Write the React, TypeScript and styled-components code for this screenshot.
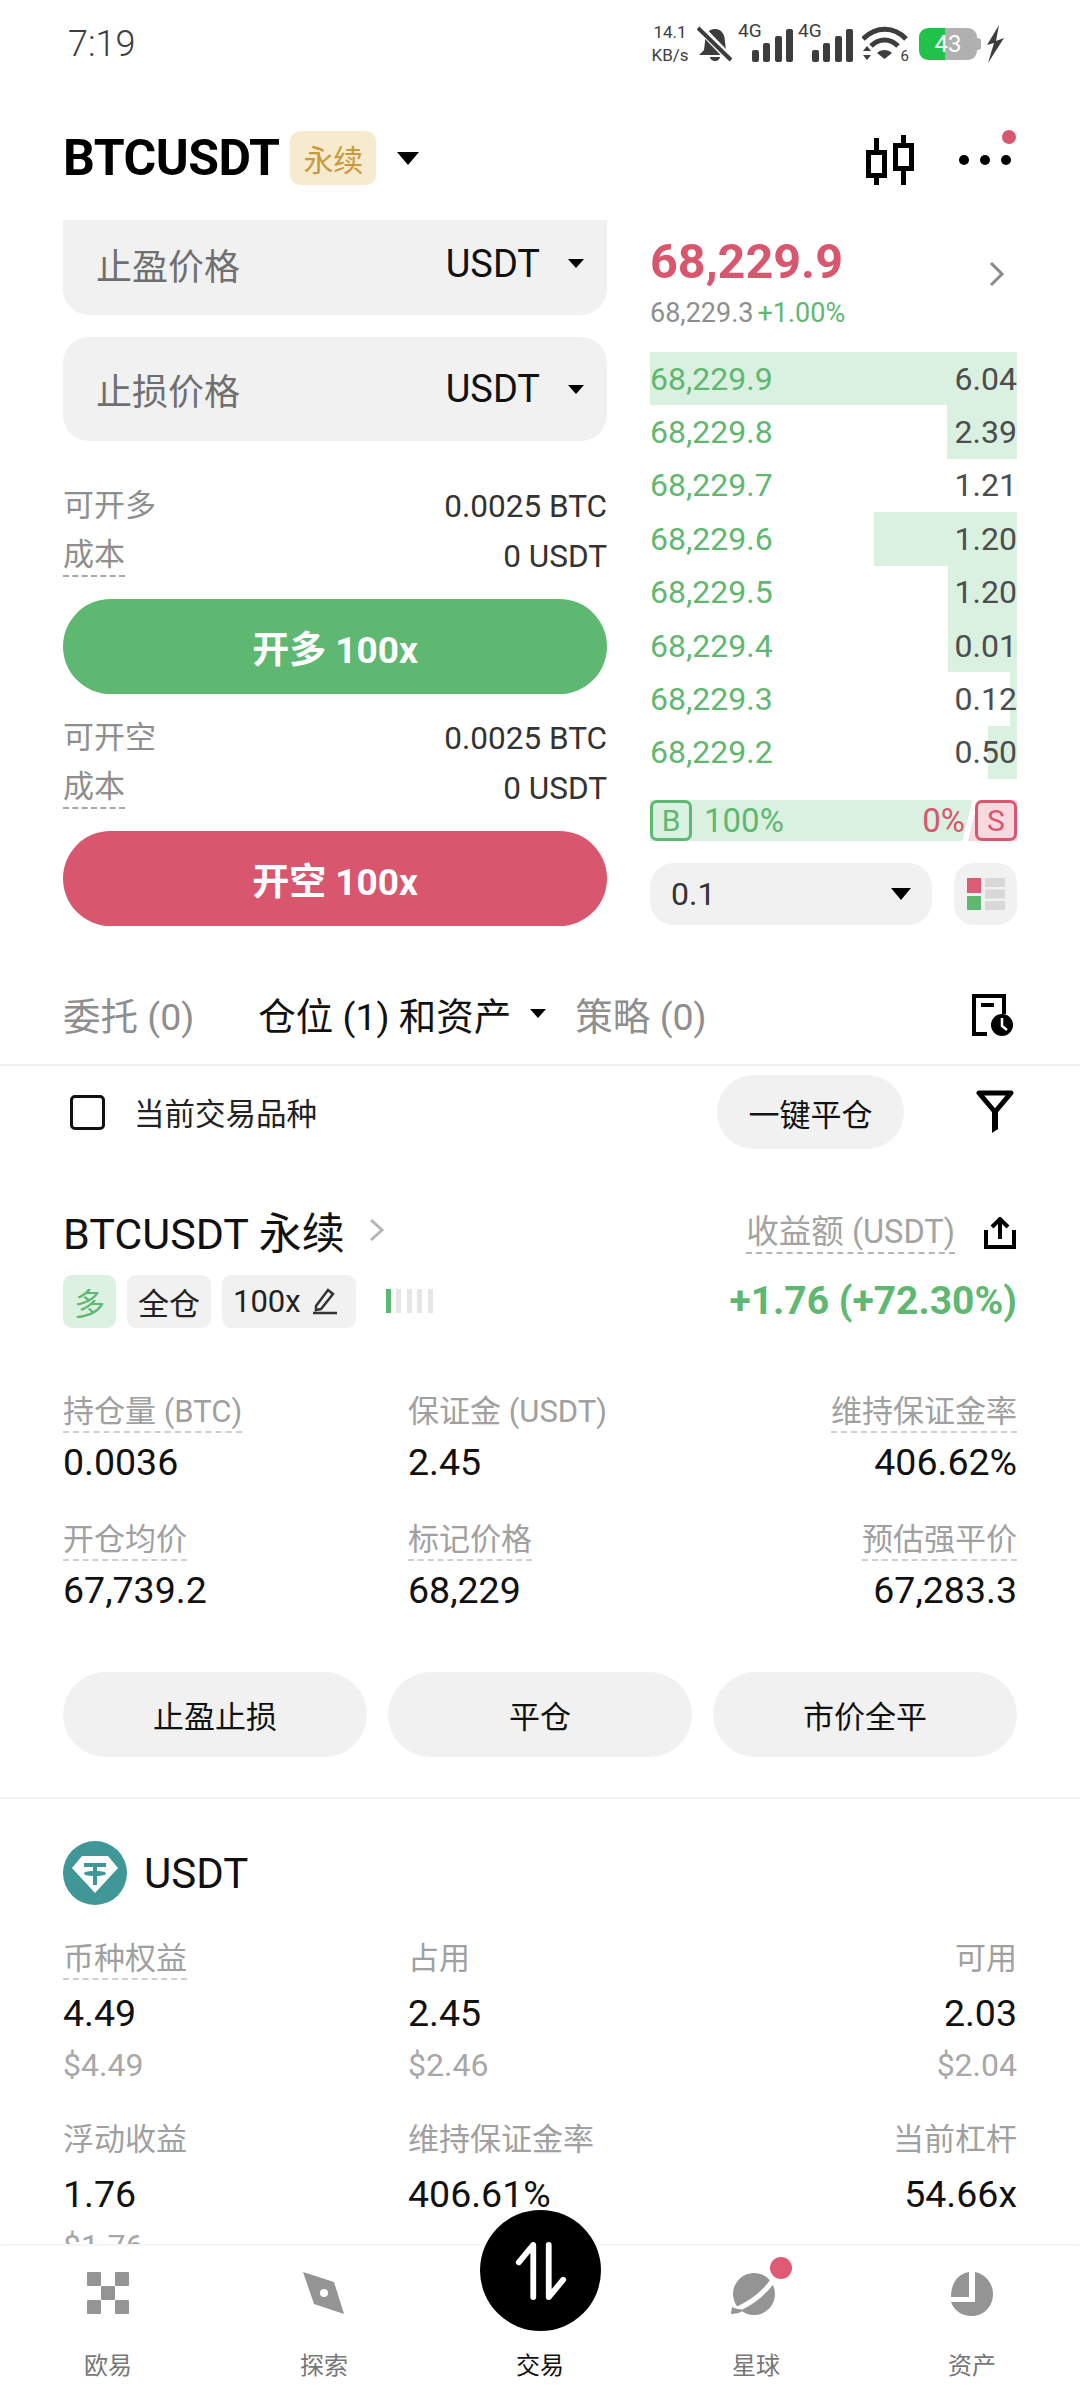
import React from 'react'
import styled, { createGlobalStyle } from 'styled-components'

const FONT = `Roboto, "Noto Sans CJK SC", sans-serif`
const GREEN = '#5fb871'
const RED = '#d9566f'
const GREY = '#8e8e8e'

const GlobalStyle = createGlobalStyle`
  html, body { margin: 0; padding: 0; background: #fff; }
  * { box-sizing: border-box; }
  body { font-family: ${FONT}; color: #000; }
`

const Page = styled.div`
  position: relative;
  width: 1080px;
  height: 2400px;
  overflow: hidden;
  background: #fff;
`

const StatusBar = styled.div`
  height: 96px;
  padding: 0 75px 8px 68px;
  display: flex;
  align-items: center;
  justify-content: space-between;
  color: #3d3d3d;
`
const Clock = styled.span`
  font-size: 36px;
  font-weight: 300;
`
const StatusIcons = styled.div`
  display: flex;
  align-items: center;
`
const Speed = styled.div`
  font-size: 17px;
  line-height: 23px;
  text-align: center;
  width: 38px;
  margin-right: 8px;
`
const NetBlock = styled.div`
  position: relative;
  width: 60px;
  height: 36px;
  display: flex;
  justify-content: flex-end;
  align-items: flex-end;
`
const NetLabel = styled.span`
  position: absolute;
  left: 5px;
  top: -5px;
  font-size: 19px;
  line-height: 20px;
`
const WifiBlock = styled.div`
  position: relative;
  width: 46px;
  height: 36px;
  margin-left: 9px;
`
const WifiBand = styled.span`
  position: absolute;
  right: -1px;
  bottom: -2px;
  font-size: 15px;
  line-height: 16px;
`
const Battery = styled.div`
  position: relative;
  width: 58px;
  height: 32px;
  margin: 0 8px 0 11px;
  border-radius: 9px;
  background: linear-gradient(90deg, #22c24a 0 45%, #b0b0b0 45% 100%);
  color: #fff;
  font-size: 24px;
  line-height: 32px;
  text-align: center;
  &::after {
    content: '';
    position: absolute;
    right: -4px;
    top: 10px;
    width: 4px;
    height: 12px;
    border-radius: 0 3px 3px 0;
    background: #b0b0b0;
  }
`

const Header = styled.div`
  height: 124px;
  padding: 0 63px;
  display: flex;
  align-items: center;
`
const Symbol = styled.h1`
  margin: 0;
  font-size: 50px;
  font-weight: 700;
  letter-spacing: -0.5px;
`
const PerpBadge = styled.span`
  width: 86px;
  height: 54px;
  margin-left: 11px;
  border-radius: 10px;
  background: #f7ebcf;
  color: #c99a3c;
  font-size: 30px;
  display: flex;
  align-items: center;
  justify-content: center;
`
const Caret = styled.span<{ $size?: number; $color?: string }>`
  display: inline-block;
  width: 0;
  height: 0;
  border-left: ${(p) => p.$size ?? 10}px solid transparent;
  border-right: ${(p) => p.$size ?? 10}px solid transparent;
  border-top: ${(p) => (p.$size ?? 10) * 1.2}px solid ${(p) => p.$color ?? '#000'};
`
const HeaderCaret = styled(Caret)`
  margin-left: 21px;
`
const HeaderActions = styled.div`
  margin-left: auto;
  margin-right: 6px;
  padding-top: 4px;
  display: flex;
  align-items: center;
  gap: 45px;
`
const MoreButton = styled.div`
  position: relative;
  width: 52px;
  height: 10px;
  display: flex;
  justify-content: space-between;
  &::after {
    content: '';
    position: absolute;
    right: -5px;
    top: -25px;
    width: 14px;
    height: 14px;
    border-radius: 50%;
    background: ${RED};
  }
`
const Dot = styled.i`
  width: 10px;
  height: 10px;
  border-radius: 50%;
  background: #000;
`

const TradePanel = styled.div`
  height: 742px;
  padding: 0 63px;
  display: grid;
  grid-template-columns: 544px 367px;
  column-gap: 43px;
`
const LeftColumn = styled.div`
  display: flex;
  flex-direction: column;
`
const PriceField = styled.div<{ $clipped?: boolean }>`
  height: ${(p) => (p.$clipped ? 95 : 104)}px;
  margin-bottom: ${(p) => (p.$clipped ? 22 : 40)}px;
  padding: ${(p) => (p.$clipped ? '0 23px 8px 33px' : '0 23px 0 33px')};
  border-radius: ${(p) => (p.$clipped ? '0 0 26px 26px' : '26px')};
  background: #f1f1f1;
  display: flex;
  align-items: center;
  justify-content: space-between;
`
const FieldLabel = styled.span`
  font-size: 36px;
  color: #6f6f6f;
`
const FieldUnit = styled.span`
  display: flex;
  align-items: center;
  gap: 28px;
  font-size: 38px;
  color: #111;
`
const InfoRow = styled.div`
  height: 50px;
  display: flex;
  align-items: center;
  justify-content: space-between;
  font-size: 31.5px;
  color: #333;
`
const InfoLabel = styled.span<{ $dashed?: boolean }>`
  font-size: 31px;
  line-height: 38px;
  color: ${GREY};
  ${(p) => p.$dashed && `border-bottom: 2px dashed #a8a8a8; padding-bottom: 1px;`}
`
const ActionButton = styled.div<{ $color: string }>`
  height: 95px;
  margin: 18px 0 19px;
  border-radius: 48px;
  background: ${(p) => p.$color};
  color: #fff;
  font-size: 37px;
  font-weight: 700;
  display: flex;
  align-items: center;
  justify-content: center;
`

const RightColumn = styled.div`
  display: flex;
  flex-direction: column;
`
const PriceBlock = styled.div`
  height: 132px;
  padding-top: 14px;
  position: relative;
`
const LastPrice = styled.div`
  font-size: 48.5px;
  line-height: 56px;
  font-weight: 700;
  color: ${RED};
`
const SubPrice = styled.div`
  margin-top: 6px;
  font-size: 27px;
  line-height: 34px;
  color: ${GREY};
  span {
    color: ${GREEN};
    margin-left: 4px;
  }
`
const PriceChevron = styled.svg`
  position: absolute;
  right: 12px;
  top: 41px;
`
const BookRow = styled.div`
  position: relative;
  height: 53.4px;
  display: flex;
  align-items: center;
  justify-content: space-between;
  font-size: 32px;
  color: ${GREEN};
`
const BookBar = styled.div`
  position: absolute;
  right: 0;
  top: 0;
  bottom: 0;
  background: #daf0e0;
`
const BookPrice = styled.span`
  position: relative;
`
const BookSize = styled.span`
  position: relative;
  color: #4d4d4d;
`
const RatioBar = styled.div`
  position: relative;
  height: 41px;
  margin-top: 21px;
  display: flex;
  align-items: center;
  font-size: 33px;
  background: linear-gradient(104deg, #daf0e0 0 85.5%, #fff 85.5% 87%, #f9d9e0 87% 100%);
`
const SideBox = styled.span<{ $color: string; $fill: string }>`
  width: 42px;
  height: 41px;
  border: 3px solid ${(p) => p.$color};
  border-radius: 7px;
  background: ${(p) => p.$fill};
  color: ${(p) => p.$color};
  font-size: 30px;
  display: flex;
  align-items: center;
  justify-content: center;
`
const RatioBuy = styled.span`
  margin-left: 12px;
  color: ${GREEN};
`
const RatioSell = styled.span`
  margin-left: auto;
  margin-right: 10px;
  color: ${RED};
`
const DepthRow = styled.div`
  margin-top: 22px;
  display: flex;
  justify-content: space-between;
`
const DepthSelect = styled.div`
  width: 282px;
  height: 62px;
  padding: 0 21px 0 21px;
  border-radius: 24px;
  background: #f1f1f1;
  font-size: 32px;
  color: #333;
  display: flex;
  align-items: center;
  justify-content: space-between;
`
const LayoutButton = styled.div`
  width: 63px;
  height: 62px;
  border-radius: 20px;
  background: #f1f1f1;
  display: flex;
  align-items: center;
  justify-content: center;
`

const Tabs = styled.div`
  height: 104px;
  padding: 0 63px 0 63px;
  border-bottom: 2px solid #efefef;
  display: flex;
  align-items: center;
  font-size: 37.5px;
`
const Tab = styled.span<{ $active?: boolean }>`
  color: ${(p) => (p.$active ? '#111' : GREY)};
`
const ActiveTab = styled(Tab)`
  margin-left: 64px;
`
const TabCaret = styled(Caret)`
  margin: 0 29px 0 19px;
`
const TabIcon = styled.svg`
  margin-left: auto;
  margin-right: 2px;
  margin-top: 3px;
`

const FilterBar = styled.div`
  height: 84px;
  margin-top: 4px;
  padding: 0 66px 0 70px;
  display: flex;
  align-items: center;
`
const Checkbox = styled.span`
  width: 35px;
  height: 35px;
  border: 3px solid #111;
  border-radius: 5px;
`
const FilterLabel = styled.span`
  margin-left: 29px;
  font-size: 30.5px;
  color: #222;
`
const CloseAll = styled.div`
  width: 187px;
  height: 74px;
  margin-left: auto;
  border-radius: 37px;
  background: #f1f1f1;
  font-size: 31px;
  color: #111;
  display: flex;
  align-items: center;
  justify-content: center;
`
const FilterIcon = styled.svg`
  margin-left: 72px;
`

const Position = styled.div`
  height: 645px;
  padding: 46px 63px 0;
  border-bottom: 2px solid #f1f1f1;
`
const PositionHead = styled.div`
  display: flex;
  align-items: center;
  justify-content: space-between;
  height: 60px;
`
const PositionTitle = styled.div`
  display: flex;
  align-items: center;
  gap: 24px;
  font-size: 43px;
  color: #111;
`
const PnlLabel = styled.div`
  display: flex;
  align-items: center;
  gap: 28px;
  font-size: 32.5px;
  color: #a3a3a3;
  padding-top: 6px;
`
const DashedText = styled.span`
  border-bottom: 2px dashed #b5b5b5;
  line-height: 40px;
`
const TagRow = styled.div`
  margin-top: 14px;
  height: 54px;
  display: flex;
  align-items: center;
  gap: 11px;
`
const Tag = styled.span<{ $long?: boolean; $wide?: boolean }>`
  height: 53px;
  padding: 0 ${(p) => (p.$wide ? 17 : 11)}px 0 11px;
  border-radius: 9px;
  background: ${(p) => (p.$long ? '#dcf1e2' : '#f1f1f1')};
  color: ${(p) => (p.$long ? GREEN : '#222')};
  font-size: 31px;
  display: flex;
  align-items: center;
  gap: 10px;
`
const LeverageBars = styled.div`
  margin-left: 19px;
  display: flex;
  gap: 5.5px;
`
const LeverageBar = styled.i<{ $on?: boolean }>`
  width: 5px;
  height: 24px;
  background: ${(p) => (p.$on ? GREEN : '#e6e6e6')};
`
const Pnl = styled.span`
  margin-left: auto;
  font-size: 39px;
  font-weight: 700;
  color: ${GREEN};
`
const StatsGrid = styled.div<{ $top: number; $rowGap: number }>`
  margin-top: ${(p) => p.$top}px;
  display: grid;
  grid-template-columns: 345px 1fr auto;
  row-gap: ${(p) => p.$rowGap}px;
`
const Stat = styled.div<{ $right?: boolean }>`
  text-align: ${(p) => (p.$right ? 'right' : 'left')};
`
const StatLabel = styled.div`
  height: 40px;
  font-size: 31px;
  line-height: 40px;
  color: #a0a0a0;
`
const DashedLabel = styled.span<{ $dashed?: boolean }>`
  display: inline-block;
  line-height: 38px;
  ${(p) => p.$dashed && `border-bottom: 2px dashed #cfcfcf;`}
`
const StatValue = styled.div<{ $gap?: number }>`
  margin-top: ${(p) => p.$gap ?? 8}px;
  font-size: 37.5px;
  line-height: 44px;
  color: #111;
`
const StatFiat = styled.div`
  margin-top: 9px;
  font-size: 32px;
  line-height: 42px;
  color: #a8a8a8;
`
const PositionActions = styled.div`
  margin-top: 60px;
  display: grid;
  grid-template-columns: repeat(3, 1fr);
  column-gap: 21px;
`
const PillButton = styled.div`
  height: 85px;
  border-radius: 43px;
  background: #f1f1f1;
  font-size: 31px;
  color: #111;
  display: flex;
  align-items: center;
  justify-content: center;
`

const Asset = styled.div`
  padding: 42px 63px 0;
`
const AssetHead = styled.div`
  display: flex;
  align-items: center;
  gap: 17px;
  font-size: 42px;
  color: #111;
`

const BottomNav = styled.div`
  position: absolute;
  left: 0;
  right: 0;
  bottom: 0;
  height: 156px;
  background: #fff;
  border-top: 2px solid #f6f6f6;
  box-shadow: 0 -6px 10px rgba(0, 0, 0, 0.012);
  display: grid;
  grid-template-columns: repeat(5, 1fr);
`
const NavItem = styled.div<{ $active?: boolean }>`
  position: relative;
  padding-top: 98px;
  text-align: center;
  font-size: 24px;
  line-height: 44px;
  color: ${(p) => (p.$active ? '#111' : '#777')};
`
const NavIcon = styled.svg<{ $top?: number; $shift?: number }>`
  position: absolute;
  left: 50%;
  top: ${(p) => p.$top ?? 26}px;
  margin-left: ${(p) => p.$shift ?? 0}px;
  transform: translateX(-50%);
`
const TradeCircle = styled.div`
  position: absolute;
  left: 50%;
  top: -36px;
  width: 121px;
  height: 121px;
  margin-left: -60px;
  border-radius: 50%;
  background: #000;
  display: flex;
  align-items: center;
  justify-content: center;
`

const stats = [
  { label: '持仓量 (BTC)', value: '0.0036', dashed: true },
  { label: '保证金 (USDT)', value: '2.45' },
  { label: '维持保证金率', value: '406.62%', dashed: true, right: true },
  { label: '开仓均价', value: '67,739.2', dashed: true },
  { label: '标记价格', value: '68,229', dashed: true },
  { label: '预估强平价', value: '67,283.3', dashed: true, right: true },
]

const assets = [
  { label: '币种权益', value: '4.49', fiat: '$4.49', dashed: true },
  { label: '占用', value: '2.45', fiat: '$2.46' },
  { label: '可用', value: '2.03', fiat: '$2.04', right: true },
  { label: '浮动收益', value: '1.76', fiat: '$1.76' },
  { label: '维持保证金率', value: '406.61%', fiat: '' },
  { label: '当前杠杆', value: '54.66x', fiat: '', right: true },
]

const book = [
  ['68,229.9', '6.04', 367],
  ['68,229.8', '2.39', 70],
  ['68,229.7', '1.21', 0],
  ['68,229.6', '1.20', 143],
  ['68,229.5', '1.20', 69],
  ['68,229.4', '0.01', 69],
  ['68,229.3', '0.12', 7],
  ['68,229.2', '0.50', 29],
] as const

const SignalBars = () => (
  <svg width="41" height="33" viewBox="0 0 41 33" fill="#3d3d3d">
    <rect x="0" y="21" width="7" height="12" rx="2" />
    <rect x="11" y="14" width="7" height="19" rx="2" />
    <rect x="23" y="7" width="7" height="26" rx="2" />
    <rect x="34" y="0" width="7" height="33" rx="2" />
  </svg>
)

const App: React.FC = () => (
  <Page>
    <GlobalStyle />
    <StatusBar>
      <Clock>7:19</Clock>
      <StatusIcons>
        <Speed>
          14.1
          <br />
          KB/s
        </Speed>
        <svg width="36" height="36" viewBox="0 0 36 36" fill="#3d3d3d">
          <path d="M18 3c7 0 10 6 10 13l1 8 5 5H2l5-5 1-8c0-7 3-13 10-13z" />
          <path d="M13 31h10a5 4 0 0 1-10 0z" />
          <path d="M3 2l31 32" stroke="#fff" strokeWidth="8" />
          <path d="M1 2l33 32" stroke="#3d3d3d" strokeWidth="4" />
        </svg>
        <NetBlock>
          <NetLabel>4G</NetLabel>
          <SignalBars />
        </NetBlock>
        <NetBlock>
          <NetLabel>4G</NetLabel>
          <SignalBars />
        </NetBlock>
        <WifiBlock>
          <svg width="46" height="36" viewBox="0 0 46 36" fill="none">
            <path d="M1 13C14 0 32 0 44 13" stroke="#3d3d3d" strokeWidth="5" />
            <path d="M9 20c8-8 19-8 27 0" stroke="#3d3d3d" strokeWidth="5" />
            <path d="M15 27c4-4 11-4 15 0l-7.500 6z" fill="#3d3d3d" />
            <path d="M1 25l4-5 4 5zM1 29l4 5 4-5z" fill="#3d3d3d" />
          </svg>
          <WifiBand>6</WifiBand>
        </WifiBlock>
        <Battery>43</Battery>
        <svg width="20" height="38" viewBox="0 0 20 38" fill="#3d3d3d">
          <path d="M14 0L2 20l7-2-6 20L19 13l-8 3z" />
        </svg>
      </StatusIcons>
    </StatusBar>

    <Header>
      <Symbol>BTCUSDT</Symbol>
      <PerpBadge>永续</PerpBadge>
      <HeaderCaret $size={11} />
      <HeaderActions>
        <svg width="48" height="50" viewBox="0 0 48 50" fill="none" stroke="#000" strokeWidth="5">
          <rect x="2.500" y="17.500" width="16" height="23" fill="#fff" />
          <path d="M10.500 3v14M10.500 41v9" />
          <rect x="29.500" y="10.500" width="16" height="23" fill="#fff" />
          <path d="M37.500 0v10M37.500 34v16" />
        </svg>
        <MoreButton>
          <Dot />
          <Dot />
          <Dot />
        </MoreButton>
      </HeaderActions>
    </Header>

    <TradePanel>
      <LeftColumn>
        <PriceField $clipped>
          <FieldLabel>止盈价格</FieldLabel>
          <FieldUnit>
            USDT
            <Caret $size={8} />
          </FieldUnit>
        </PriceField>
        <PriceField>
          <FieldLabel>止损价格</FieldLabel>
          <FieldUnit>
            USDT
            <Caret $size={8} />
          </FieldUnit>
        </PriceField>
        <InfoRow>
          <InfoLabel>可开多</InfoLabel>
          <span>0.0025 BTC</span>
        </InfoRow>
        <InfoRow>
          <InfoLabel $dashed>成本</InfoLabel>
          <span>0 USDT</span>
        </InfoRow>
        <ActionButton $color={GREEN}>开多 100x</ActionButton>
        <InfoRow>
          <InfoLabel>可开空</InfoLabel>
          <span>0.0025 BTC</span>
        </InfoRow>
        <InfoRow>
          <InfoLabel $dashed>成本</InfoLabel>
          <span>0 USDT</span>
        </InfoRow>
        <ActionButton $color={RED}>开空 100x</ActionButton>
      </LeftColumn>

      <RightColumn>
        <PriceBlock>
          <LastPrice>68,229.9</LastPrice>
          <SubPrice>
            68,229.3<span>+1.00%</span>
          </SubPrice>
          <PriceChevron width="16" height="26" viewBox="0 0 16 26" fill="none" stroke="#8a8a8a" strokeWidth="3">
            <path d="M2 2l11 11L2 24" />
          </PriceChevron>
        </PriceBlock>
        {book.map(([price, size, width]) => (
          <BookRow key={price}>
            <BookBar style={{ width }} />
            <BookPrice>{price}</BookPrice>
            <BookSize>{size}</BookSize>
          </BookRow>
        ))}
        <RatioBar>
          <SideBox $color={GREEN} $fill="transparent">B</SideBox>
          <RatioBuy>100%</RatioBuy>
          <RatioSell>0%</RatioSell>
          <SideBox $color={RED} $fill="#f9d9e0">S</SideBox>
        </RatioBar>
        <DepthRow>
          <DepthSelect>
            0.1
            <Caret $size={10} />
          </DepthSelect>
          <LayoutButton>
            <svg width="38" height="32" viewBox="0 0 38 32">
              <rect x="0" y="0" width="14" height="15" fill="#df5b75" />
              <rect x="0" y="18" width="14" height="14" fill={GREEN} />
              <rect x="18" y="0" width="20" height="9" fill="#d8d8d8" />
              <rect x="18" y="11.500" width="20" height="9" fill="#d8d8d8" />
              <rect x="18" y="23" width="20" height="9" fill="#d8d8d8" />
            </svg>
          </LayoutButton>
        </DepthRow>
      </RightColumn>
    </TradePanel>

    <Tabs>
      <Tab>委托 (0)</Tab>
      <ActiveTab $active>仓位 (1) 和资产</ActiveTab>
      <TabCaret $size={8} />
      <Tab>策略 (0)</Tab>
      <TabIcon width="44" height="42" viewBox="0 0 42 42" fill="none">
        <path d="M15 40H2V2h30v18" stroke="#000" strokeWidth="4" />
        <path d="M9 11h13" stroke="#000" strokeWidth="4" />
        <circle cx="30" cy="31" r="11" fill="#000" />
        <path d="M30 24v8l5 4" stroke="#fff" strokeWidth="2.500" />
      </TabIcon>
    </Tabs>

    <FilterBar>
      <Checkbox />
      <FilterLabel>当前交易品种</FilterLabel>
      <CloseAll>一键平仓</CloseAll>
      <FilterIcon width="38" height="44" viewBox="0 0 38 44" fill="none">
        <path d="M3 3h32L19 22z" stroke="#000" strokeWidth="5" strokeLinejoin="round" />
        <path d="M16 20h6v19l-6 4z" fill="#000" />
      </FilterIcon>
    </FilterBar>

    <Position>
      <PositionHead>
        <PositionTitle>
          BTCUSDT 永续
          <svg width="16" height="24" viewBox="0 0 16 24" fill="none" stroke="#b5b5b5" strokeWidth="3">
            <path d="M2 2l11 10L2 22" />
          </svg>
        </PositionTitle>
        <PnlLabel>
          <DashedText>收益额 (USDT)</DashedText>
          <svg width="34" height="32" viewBox="0 0 34 32" fill="none" stroke="#000" strokeWidth="4">
            <path d="M3 13v17h28V13" />
            <path d="M17 22V3M9 10l8-8 8 8" />
          </svg>
        </PnlLabel>
      </PositionHead>
      <TagRow>
        <Tag $long>多</Tag>
        <Tag>全仓</Tag>
        <Tag $wide>
          100x
          <svg width="28" height="28" viewBox="0 0 26 28" fill="none" stroke="#333" strokeWidth="2.500">
            <path d="M4 19L16 3l5 4-12 15-5 1zM1 26h24" />
          </svg>
        </Tag>
        <LeverageBars>
          <LeverageBar $on />
          <LeverageBar />
          <LeverageBar />
          <LeverageBar />
          <LeverageBar />
        </LeverageBars>
        <Pnl>+1.76 (+72.30%)</Pnl>
      </TagRow>

      <StatsGrid $top={64} $rowGap={36}>
        {stats.map((s) => (
          <Stat key={s.label} $right={s.right}>
            <StatLabel>
              <DashedLabel $dashed={s.dashed}>{s.label}</DashedLabel>
            </StatLabel>
            <StatValue>{s.value}</StatValue>
          </Stat>
        ))}
      </StatsGrid>

      <PositionActions>
        <PillButton>止盈止损</PillButton>
        <PillButton>平仓</PillButton>
        <PillButton>市价全平</PillButton>
      </PositionActions>
    </Position>

    <Asset>
      <AssetHead>
        <svg width="64" height="64" viewBox="0 0 64 64">
          <circle cx="32" cy="32" r="32" fill="#3f9797" />
          <path d="M19 15h26l10 12-23 25L9 27z" fill="#fff" />
          <path d="M21 22h22v4H34v4c5 0 9 1 9 2.500S39 35 34 35v9h-4v-9c-5 0-9-1-9-2.500s4-2.500 9-2.500v-4h-9z" fill="#3f9797" />
        </svg>
        USDT
      </AssetHead>
      <StatsGrid $top={34} $rowGap={34}>
        {assets.map((a) => (
          <Stat key={a.label} $right={a.right}>
            <StatLabel>
              <DashedLabel $dashed={a.dashed}>{a.label}</DashedLabel>
            </StatLabel>
            <StatValue $gap={12}>{a.value}</StatValue>
            <StatFiat>{a.fiat}</StatFiat>
          </Stat>
        ))}
      </StatsGrid>
    </Asset>

    <BottomNav>
      <NavItem>
        <NavIcon width="42" height="42" viewBox="0 0 42 42" fill="#949494">
          <rect x="0" y="0" width="14" height="14" rx="1" />
          <rect x="28" y="0" width="14" height="14" rx="1" />
          <rect x="14" y="14" width="14" height="14" rx="1" />
          <rect x="0" y="28" width="14" height="14" rx="1" />
          <rect x="28" y="28" width="14" height="14" rx="1" />
        </NavIcon>
        欧易
      </NavItem>
      <NavItem>
        <NavIcon width="42" height="42" viewBox="0 0 42 42" fill="#949494">
          <path d="M0 0l31 10 10 32-30-10z" />
          <circle cx="21" cy="21" r="4" fill="#fff" />
        </NavIcon>
        探索
      </NavItem>
      <NavItem $active>
        <TradeCircle>
          <svg width="52" height="58" viewBox="0 0 52 60" fill="none" stroke="#fff" strokeWidth="6" strokeLinecap="round" strokeLinejoin="round">
            <path d="M3 21L18 3v54" />
            <path d="M34 3v54l15-18" />
          </svg>
        </TradeCircle>
        交易
      </NavItem>
      <NavItem>
        <NavIcon width="64" height="70" viewBox="0 0 64 70" $top={1} $shift={6}>
          <circle cx="24" cy="47" r="21" fill="#949494" />
          <path d="M3 64C18 58 34 47 44 32" fill="none" stroke="#fff" strokeWidth="5" />
          <path d="M1 67l1-7c4 2 8 2 12 3-4 3-9 4-13 4z" fill="#949494" />
          <circle cx="51" cy="21" r="11" fill="#df5b75" />
        </NavIcon>
        星球
      </NavItem>
      <NavItem>
        <NavIcon width="42" height="44" viewBox="0 0 42 44" fill="#949494">
          <path d="M18 0v25H0C0 12 6 2 18 0z" />
          <path d="M24 0c10 2 18 11 18 22 0 12-9 22-21 22C10 44 3 38 0 30h24z" />
        </NavIcon>
        资产
      </NavItem>
    </BottomNav>
  </Page>
)

export default App
